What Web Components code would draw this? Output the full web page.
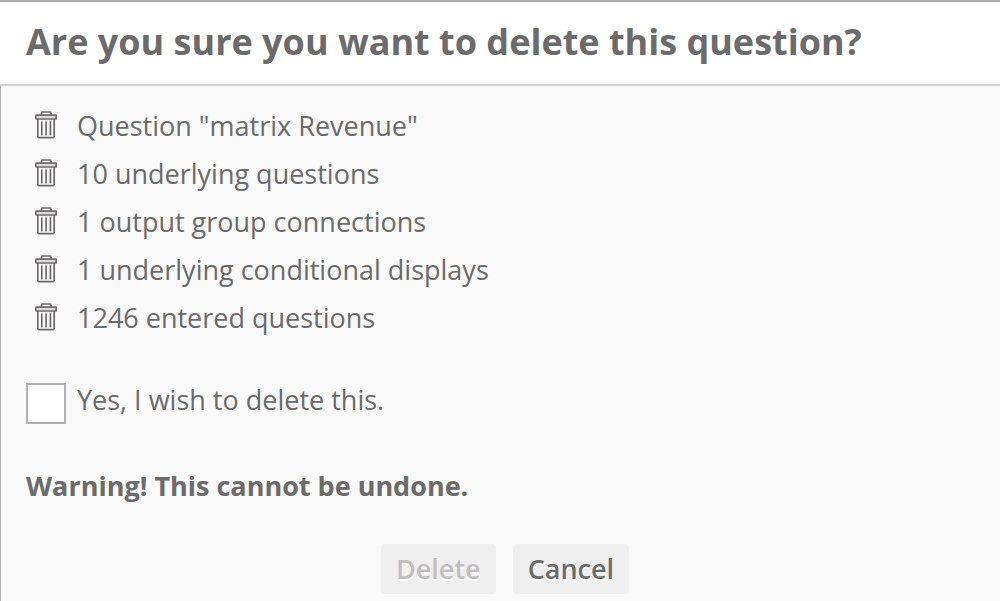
<!DOCTYPE html>
<html lang="en">
<head>
<meta charset="utf-8">
<meta name="viewport" content="width=device-width, initial-scale=1">
<title>Delete question</title>
<style>
  body {
    margin: 0;
    min-height: 100vh;
    display: flex;
    background: #f9f9f9;
    color: #6c6a6a;
    font: 27px/48px "Open Sans", "Noto Sans", sans-serif;
  }
</style>
</head>
<body>
<confirm-dialog>
  <span slot="title">Are you sure you want to delete this question?</span>
  <trash-item>Question "matrix Revenue"</trash-item>
  <trash-item>10 underlying questions</trash-item>
  <trash-item>1 output group connections</trash-item>
  <trash-item>1 underlying conditional displays</trash-item>
  <trash-item>1246 entered questions</trash-item>
  <confirm-check slot="confirm">Yes, I wish to delete this.</confirm-check>
  <span slot="warning">Warning! This cannot be undone.</span>
  <dialog-button slot="actions" disabled>Delete</dialog-button>
  <dialog-button slot="actions">Cancel</dialog-button>
</confirm-dialog>

<script>
(function () {
  function makeTemplate(html) {
    var template = document.createElement('template');
    template.innerHTML = html;
    return template;
  }

  var dialogTemplate = makeTemplate(`
    <style>
      :host {
        flex: 1;
        display: flex;
        flex-direction: column;
        box-sizing: border-box;
        border-top: 2px solid #b0b0b0;
      }
      header {
        padding: 12px 26px 14px;
        background: #fff;
        border-bottom: 2px solid #d2d2d2;
      }
      h1 {
        margin: 0;
        font-size: 36px;
        line-height: 56px;
      }
      main {
        flex: 1;
        padding: 16px 16px 0 25px;
        border-left: 1px solid #b0b0b0;
      }
      ul {
        margin: 0 0 34px;
        padding: 0;
      }
      .warning {
        margin: 38px 0 34px;
        font-weight: 700;
      }
      footer {
        display: flex;
        justify-content: center;
        gap: 17px;
        padding-bottom: 7px;
      }
    </style>
    <header><h1><slot name="title"></slot></h1></header>
    <main>
      <ul role="list"><slot></slot></ul>
      <slot name="confirm"></slot>
      <p class="warning"><slot name="warning"></slot></p>
      <footer><slot name="actions"></slot></footer>
    </main>
  `);

  var itemTemplate = makeTemplate(`
    <style>
      :host {
        display: flex;
        align-items: center;
        gap: 20px;
        padding-left: 9px;
      }
      svg {
        flex: none;
        margin-bottom: 2px;
      }
    </style>
    <svg width="22" height="28" viewBox="0 0 22 28" fill="none" stroke="#6c6a6a" stroke-width="1.7" aria-hidden="true">
      <path d="M6.5 4V2Q6.5 1 7.5 1H15Q16 1 16 2V4"/>
      <path d="M2.8 8V25Q2.8 26.7 4.5 26.7H17.5Q19.2 26.7 19.2 25V8"/>
      <rect x="0.9" y="4.2" width="20.4" height="3.8" rx="0.6" fill="#dcdcdc"/>
      <path d="M6.8 10.4V24.4M11.1 10.4V24.4M15.4 10.4V24.4"/>
    </svg>
    <span><slot></slot></span>
  `);

  var checkTemplate = makeTemplate(`
    <style>
      :host {
        display: block;
      }
      label {
        display: flex;
        align-items: flex-end;
        gap: 11px;
      }
      input {
        appearance: none;
        flex: none;
        box-sizing: border-box;
        width: 40px;
        height: 41px;
        margin: 0;
        border: 2px solid #b0b0b0;
        background: #fff;
      }
      input:checked {
        background: #6c6a6a;
        box-shadow: inset 0 0 0 6px #fff;
      }
    </style>
    <label><input type="checkbox"><span><slot></slot></span></label>
  `);

  var buttonTemplate = makeTemplate(`
    <style>
      :host {
        display: block;
      }
      button {
        display: block;
        padding: 0 15px;
        border: 0;
        border-radius: 4px;
        background: #efefef;
        color: #6c6a6a;
        font: inherit;
        font-weight: 600;
        line-height: 50px;
        text-shadow: 0 2px 0 #fff;
        cursor: pointer;
      }
      button:disabled {
        color: #c2bdbd;
        cursor: default;
      }
    </style>
    <button type="button"><slot></slot></button>
  `);

  class ConfirmDialog extends HTMLElement {
    constructor() {
      super();
      this.attachShadow({ mode: 'open' });
      this.shadowRoot.appendChild(dialogTemplate.content.cloneNode(true));
    }
  }

  class TrashItem extends HTMLElement {
    constructor() {
      super();
      this.attachShadow({ mode: 'open' });
      this.shadowRoot.appendChild(itemTemplate.content.cloneNode(true));
    }

    connectedCallback() {
      this.setAttribute('role', 'listitem');
    }
  }

  class ConfirmCheck extends HTMLElement {
    constructor() {
      super();
      this.attachShadow({ mode: 'open' });
      this.shadowRoot.appendChild(checkTemplate.content.cloneNode(true));
      this.box = this.shadowRoot.querySelector('input');
      // change events stay inside the shadow root unless sent on
      this.box.addEventListener('change', () => {
        this.dispatchEvent(new CustomEvent('confirm-change', {
          bubbles: true,
          detail: this.box.checked
        }));
      });
    }
  }

  class DialogButton extends HTMLElement {
    static get observedAttributes() {
      return ['disabled'];
    }

    constructor() {
      super();
      this.attachShadow({ mode: 'open' });
      this.shadowRoot.appendChild(buttonTemplate.content.cloneNode(true));
      this.button = this.shadowRoot.querySelector('button');
    }

    attributeChangedCallback() {
      this.button.disabled = this.hasAttribute('disabled');
    }
  }

  window.customElements.define('confirm-dialog', ConfirmDialog);
  window.customElements.define('trash-item', TrashItem);
  window.customElements.define('confirm-check', ConfirmCheck);
  window.customElements.define('dialog-button', DialogButton);

  document.addEventListener('confirm-change', function (event) {
    document.querySelector('dialog-button').toggleAttribute('disabled', !event.detail);
  });
})();
</script>
</body>
</html>
